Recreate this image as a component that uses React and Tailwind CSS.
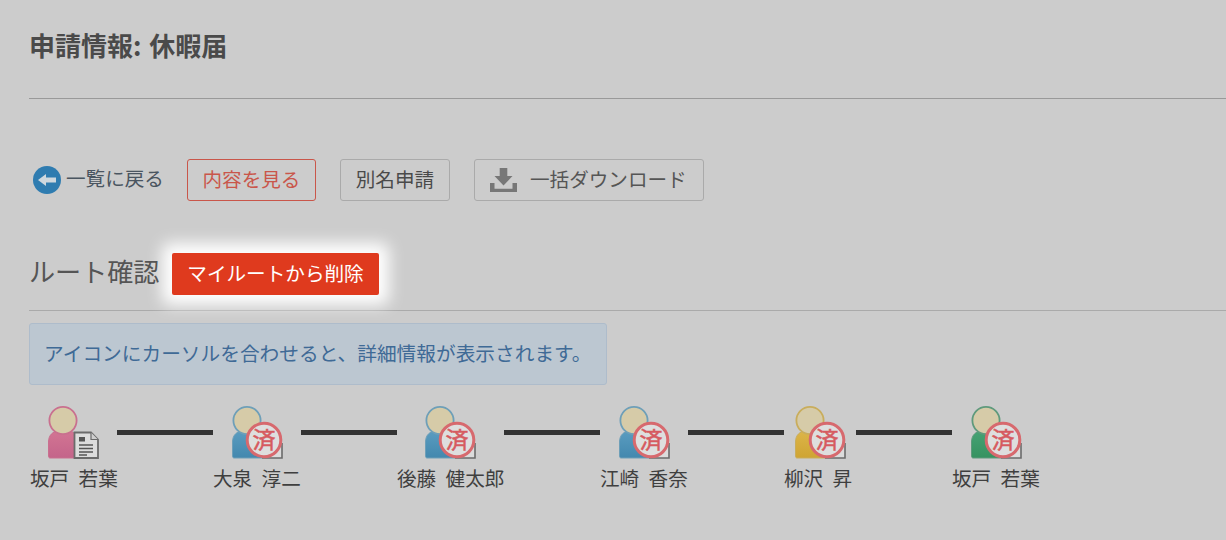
const font = { fontFamily: '"Noto Sans CJK JP", sans-serif' };

function Person({ id, top, bottom, ring }) {
  return (
    <>
      <defs>
        <linearGradient id={id} x1="0" y1="0" x2="0" y2="1">
          <stop offset="0" stopColor={top} />
          <stop offset="1" stopColor={bottom} />
        </linearGradient>
      </defs>
      <path d="M2 53 C1 53 0.5 52 0.5 51 L0.5 37 C0.5 30 5 26.5 10 26 L20 26 C26 26 30 30 30 37 L30 53 Z" fill={`url(#${id})`} stroke={ring} strokeWidth="1" />
      <circle cx="15" cy="15.5" r="13.6" fill="#d6cba8" stroke={ring} strokeWidth="1.8" />
    </>
  );
}

function DocIcon({ id }) {
  return (
    <svg width="52" height="54" viewBox="0 0 52 54" className="block">
      <Person id={id} top="#d27593" bottom="#c4648a" ring="#c9708f" />
      <path d="M26.5 27.5 H43 L50 34.5 V53 H26.5 Z" fill="#dcdcdc" stroke="#6b6b6b" strokeWidth="1.8" />
      <path d="M43 27.5 V34.5 H50" fill="#cfcfcf" stroke="#6b6b6b" strokeWidth="1.2" />
      <rect x="31" y="32" width="6" height="4.5" fill="#555" />
      <path d="M31 40 H45 M31 43.5 H45 M31 47 H45 M31 50 H39" stroke="#555" strokeWidth="1.4" />
    </svg>
  );
}

function StampIcon({ id, top, bottom, ring }) {
  return (
    <svg width="52" height="54" viewBox="0 0 52 54" className="block">
      <Person id={id} top={top} bottom={bottom} ring={ring} />
      <path d="M30 53 H50 V38" fill="#dcdcdc" stroke="#6b6b6b" strokeWidth="1.6" />
      <circle cx="32" cy="35" r="16.8" fill="#dedede" stroke="#d7696e" strokeWidth="3" />
      <text x="32" y="43" textAnchor="middle" fontSize="23" fill="#d65a60" stroke="#d65a60" strokeWidth="0.5" style={font}>済</text>
    </svg>
  );
}

function Node({ icon, name, width }) {
  return (
    <div className="flex flex-col" style={{ width }}>
      <div className="flex justify-center pl-[1px]">{icon}</div>
      <div className="text-[19.6px] leading-[22px] text-[#3f3f3f] whitespace-pre mt-[8px] [word-spacing:5px]">{name}</div>
    </div>
  );
}

function Line() {
  return <div className="w-[96px] h-[5px] bg-[#333333] mt-[25px] shrink-0" />;
}

const blue = { top: "#5a9cc0", bottom: "#4388ae", ring: "#6e9fb8" };

export default function App() {
  return (
    <div className="w-[1226px] h-[540px] overflow-hidden bg-[#cccccc] text-[#484848]" style={font}>
      <div className="px-[29px] pt-[28px]">
        <h1 className="text-[26px] leading-[34px] font-bold text-[#4a4a4a] [word-spacing:2px]">申請情報: 休暇届</h1>
      </div>
      <div className="ml-[29px] mt-[36px] h-px bg-[#999999]" />

      <div className="ml-[33px] mt-[60px] flex items-center h-[42px]">
        <svg width="28" height="28" viewBox="0 0 28 28" className="shrink-0">
          <circle cx="14" cy="14" r="14" fill="#2f7cb0" />
          <path d="M5 14 L13 8 V11.5 H23 V16.5 H13 V20 Z" fill="#cfd8de" />
        </svg>
        <span className="ml-[5px] text-[19.6px] leading-none text-[#4a5560] -translate-y-[2px]">一覧に戻る</span>
        <div className="ml-[23px] w-[129px] h-[42px] pb-[2px] flex items-center justify-center rounded-[3px] border border-[#c9564a] text-[19.6px] text-[#c9564a]">内容を見る</div>
        <div className="ml-[24px] w-[110px] h-[42px] pb-[2px] flex items-center justify-center rounded-[3px] border border-[#aaaaaa] text-[19.6px] text-[#4a4a4a]">別名申請</div>
        <div className="ml-[24px] w-[230px] h-[42px] flex items-center pl-[15px] rounded-[3px] border border-[#aaaaaa] text-[19.6px] text-[#555555]">
          <svg width="27" height="24" viewBox="0 0 27 24" className="shrink-0">
            <path d="M9.7 0 H17.3 V8 H22.5 L13.5 17.5 L4.5 8 H9.7 Z" fill="#777777" />
            <path d="M0 15 H4.5 V20.7 H22.5 V15 H27 V24 H0 Z" fill="#777777" />
          </svg>
          <span className="ml-[13px] -translate-y-[1px]">一括ダウンロード</span>
        </div>
      </div>

      <div className="ml-[29px] mt-[52px] flex items-center h-[42px]">
        <span className="w-[143px] text-[26.1px] leading-none text-[#555555] -translate-y-[3px]">ルート確認</span>
        <div className="w-[207px] h-[42px] pb-[2px] flex items-center justify-center rounded-[2px] bg-[#df3a1e] text-white text-[19.6px] shadow-[0_0_16px_10px_#ffffff]">マイルートから削除</div>
      </div>
      <div className="ml-[29px] mt-[15px] h-px bg-[#aaaaaa]" />

      <div className="ml-[29px] mt-[12px] w-[578px] h-[62px] pb-[2px] flex items-center pl-[14px] rounded-[3px] border border-[#aebccb] bg-[#bcc7d1] text-[19.7px] text-[#3f6a96]">アイコンにカーソルを合わせると、詳細情報が表示されます。</div>

      <div className="ml-[30px] mt-[20px] flex items-start">
        <Node width={87} name="坂戸 若葉" icon={<DocIcon id="g1" />} />
        <Line />
        <Node width={88} name="大泉 淳二" icon={<StampIcon id="g2" {...blue} />} />
        <Line />
        <Node width={107} name="後藤 健太郎" icon={<StampIcon id="g3" {...blue} />} />
        <Line />
        <Node width={88} name="江崎 香奈" icon={<StampIcon id="g4" {...blue} />} />
        <Line />
        <Node width={72} name="柳沢 昇" icon={<StampIcon id="g5" top="#dcb548" bottom="#cfa433" ring="#c9ad5c" />} />
        <Line />
        <Node width={88} name="坂戸 若葉" icon={<StampIcon id="g6" top="#46a274" bottom="#359260" ring="#5f9a7c" />} />
      </div>
    </div>
  );
}
